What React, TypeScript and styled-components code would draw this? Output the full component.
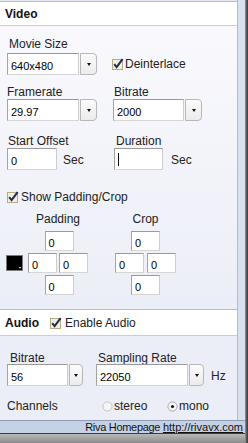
import React from "react";
import styled, { createGlobalStyle } from "styled-components";

const Global = createGlobalStyle`
  html, body { margin: 0; padding: 0; background: #ffffff; }
  body { font-family: "Liberation Sans", Arial, sans-serif; color: #1e1e1e; }
  * { box-sizing: border-box; }
`;

const Frame = styled.div`
  width: 248px;
  height: 443px;
  display: flex;
  overflow: hidden;
`;

const Main = styled.div`
  width: 245px;
  display: flex;
  flex-direction: column;
`;

const RightEdge = styled.div`
  width: 3px;
  background: linear-gradient(to right, #9c9c9c, #5c5c5c 45%, #3a3a3a);
`;

const Upper = styled.div`
  flex: 1;
  display: flex;
  min-height: 0;
`;

const Panel = styled.div`
  width: 238px;
  display: flex;
  flex-direction: column;
  border-right: 1px solid #b3bbcc;
  padding-top: 1px;
  background: #e6e8f1;
`;

const Strip = styled.div`
  flex: 1;
  background: #dae1ee;
`;

const Footer = styled.div`
  height: 13px;
  border-top: 1px solid #8e9cb6;
  background: #c5d1e5;
  display: flex;
  justify-content: flex-end;
  align-items: center;
  padding-right: 2px;
  font-size: 11px;
  line-height: 12px;
  color: #111;
  white-space: pre;
`;

const FooterText = styled.span`
  letter-spacing: -0.3px;
`;

const FooterLink = styled.span`
  text-decoration: underline;
  color: #111;
`;

const BottomEdge = styled.div`
  height: 10px;
  border-top: 1px solid #3c3c3c;
  background: linear-gradient(#b9b9b9, #8c8c8c);
`;

const SectionHeader = styled.div<{ $h: number }>`
  height: ${(p) => p.$h}px;
  background: #ffffff;
  border-top: 1px solid #b7bbca;
  border-bottom: 1px solid #c9ccd9;
  display: flex;
  align-items: center;
  padding-left: 5px;
`;

const HeaderTitle = styled.span`
  font-weight: bold;
  font-size: 12px;
  color: #111;
  margin-right: 11px;
`;

const VideoBody = styled.div`
  flex: 1;
  background: linear-gradient(#f9f9fd, #eceef7);
  padding: 11px 0 0 7px;
  display: flex;
  flex-direction: column;
`;

const AudioBody = styled.div`
  height: 84px;
  background: #eceef7;
  padding: 15px 0 0 7px;
  display: flex;
  flex-direction: column;
`;

const FieldGrid = styled.div`
  display: grid;
  grid-template-columns: 106px auto;
`;

const Field = styled.div<{ $mt?: number; $ml?: number; $end?: boolean }>`
  display: flex;
  flex-direction: column;
  justify-content: ${(p) => (p.$end ? "flex-end" : "flex-start")};
  margin-top: ${(p) => p.$mt ?? 0}px;
  margin-left: ${(p) => p.$ml ?? 0}px;
`;

const Label = styled.div<{ $indent?: number; $mb?: number }>`
  font-size: 12px;
  line-height: 14px;
  height: 14px;
  padding-left: ${(p) => p.$indent ?? 0}px;
  margin-bottom: ${(p) => p.$mb ?? 0}px;
  color: #222;
  white-space: nowrap;
`;

const ControlRow = styled.div<{ $mt?: number; $gap?: number; $top?: boolean }>`
  display: flex;
  align-items: ${(p) => (p.$top ? "flex-start" : "center")};
  margin-top: ${(p) => p.$mt ?? 0}px;
  gap: ${(p) => p.$gap ?? 0}px;
`;

const ComboWrap = styled.div<{ $w: number }>`
  width: ${(p) => p.$w}px;
  height: 22px;
  display: flex;
`;

const TextBox = styled.div<{ $w?: number; $h?: number }>`
  ${(p) => (p.$w ? `width: ${p.$w}px;` : "flex: 1;")}
  height: ${(p) => p.$h ?? 22}px;
  background: #ffffff;
  border: 1px solid;
  border-color: #9a9a9a #cdcdcd #d6d6d6 #a4a4a4;
  display: flex;
  align-items: center;
  padding: 3px 0 0 3px;
  font-size: 11px;
  color: #000;
  white-space: nowrap;
`;

const ComboButton = styled.div<{ $w: number }>`
  width: ${(p) => p.$w}px;
  margin-left: 1px;
  border: 1px solid #b8b8b8;
  border-radius: 0 4px 4px 0;
  background: linear-gradient(#fbfbfb, #ececec);
  display: flex;
  align-items: center;
  justify-content: center;
  padding-top: 1px;
`;

const Arrow = styled.span`
  width: 0;
  height: 0;
  border-left: 2.5px solid transparent;
  border-right: 2.5px solid transparent;
  border-top: 3px solid #111;
`;

const Caret = styled.span`
  width: 1px;
  height: 13px;
  background: #000;
  margin-top: -3px;
`;

const Unit = styled.span<{ $ml: number }>`
  font-size: 12px;
  margin-left: ${(p) => p.$ml}px;
  padding-top: 1px;
  color: #222;
`;

const CheckRow = styled.label<{ $mt?: number; $ml?: number; $gap?: number; $h?: number }>`
  display: flex;
  align-items: center;
  height: ${(p) => p.$h ?? 14}px;
  gap: ${(p) => p.$gap ?? 1}px;
  margin-top: ${(p) => p.$mt ?? 0}px;
  margin-left: ${(p) => p.$ml ?? 0}px;
  font-size: 12px;
  color: #222;
  white-space: nowrap;
`;

const PadGrid = styled.div`
  display: grid;
  grid-template-columns: 22px 87px 61px;
  grid-template-rows: 17px 20px 20px 20px;
  row-gap: 2px;
  margin-top: 8px;
  margin-left: -1px;
`;

const PadCell = styled.div<{ $w: number; $shift?: number; $gap?: number }>`
  width: ${(p) => p.$w}px;
  display: flex;
  justify-content: center;
  padding-left: ${(p) => p.$shift ?? 0}px;
  gap: ${(p) => p.$gap ?? 0}px;
`;

const SwatchCell = styled.div`
  align-self: center;
  display: flex;
`;

const Channels = styled.div`
  display: grid;
  grid-template-columns: 95px 65px auto;
  align-items: center;
  height: 14px;
  margin-top: 13px;
  font-size: 12px;
  color: #222;
`;

const RadioItem = styled.span`
  display: inline-flex;
  align-items: center;
  gap: 1px;
`;

const Combo: React.FC<{ value: string; w: number; bw?: number }> = ({ value, w, bw = 17 }) => (
  <ComboWrap $w={w}>
    <TextBox>{value}</TextBox>
    <ComboButton $w={bw}>
      <Arrow />
    </ComboButton>
  </ComboWrap>
);

const CheckIcon: React.FC = () => (
  <svg width="12" height="12" viewBox="0 0 12 12">
    <rect x="0.5" y="1.5" width="10" height="10" fill="#f3efdc" stroke="#b5ab86" />
    <path d="M2.2 6.2 L4.6 9.2 L10.6 1.2" stroke="#1e2c56" strokeWidth="2" fill="none" />
  </svg>
);

const RadioIcon: React.FC<{ on?: boolean }> = ({ on }) => (
  <svg width="11" height="11" viewBox="0 0 11 11">
    <circle cx="5.5" cy="5.5" r="4.6" fill="#f5f5f5" stroke={on ? "#a8a8a8" : "#c4c4c4"} />
    {on && <circle cx="5.5" cy="5.5" r="1.6" fill="#1a1a1a" />}
  </svg>
);

const ColorSwatch: React.FC = () => (
  <svg width="17" height="16" viewBox="0 0 17 16">
    <rect x="0.5" y="0.5" width="16" height="15" fill="#000" stroke="#7a7a7a" />
    <polygon points="12.5,12 15.5,12 14,13.6" fill="#d8d8d8" />
  </svg>
);

export default function App() {
  return (
    <>
      <Global />
      <Frame>
        <Main>
          <Upper>
            <Panel>
              <SectionHeader $h={25}>
                <HeaderTitle>Video</HeaderTitle>
              </SectionHeader>
              <VideoBody>
                <FieldGrid>
                  <Field>
                    <Label $indent={2}>Movie Size</Label>
                    <ControlRow $mt={2}>
                      <Combo value="640x480" w={90} />
                    </ControlRow>
                  </Field>
                  <Field $end>
                    <ControlRow>
                      <CheckRow $ml={-1} $h={22}>
                        <CheckIcon />
                        Deinterlace
                      </CheckRow>
                    </ControlRow>
                  </Field>

                  <Field $mt={10}>
                    <Label>Framerate</Label>
                    <ControlRow>
                      <Combo value="29.97" w={90} />
                    </ControlRow>
                  </Field>
                  <Field $mt={10}>
                    <Label $indent={1}>Bitrate</Label>
                    <ControlRow>
                      <Combo value="2000" w={89} />
                    </ControlRow>
                  </Field>

                  <Field $mt={13}>
                    <Label $indent={1}>Start Offset</Label>
                    <ControlRow>
                      <TextBox $w={50}>0</TextBox>
                      <Unit $ml={6}>Sec</Unit>
                    </ControlRow>
                  </Field>
                  <Field $mt={13} $ml={1}>
                    <Label $indent={2}>Duration</Label>
                    <ControlRow>
                      <TextBox $w={49}>
                        <Caret />
                      </TextBox>
                      <Unit $ml={8}>Sec</Unit>
                    </ControlRow>
                  </Field>
                </FieldGrid>

                <CheckRow $mt={20} $gap={2}>
                  <CheckIcon />
                  Show Padding/Crop
                </CheckRow>

                <PadGrid>
                  <span />
                  <PadCell $w={60}>
                    <Label>Padding</Label>
                  </PadCell>
                  <PadCell $w={61}>
                    <Label>Crop</Label>
                  </PadCell>

                  <span />
                  <PadCell $w={60} $shift={2}>
                    <TextBox $w={29} $h={20}>0</TextBox>
                  </PadCell>
                  <PadCell $w={61}>
                    <TextBox $w={29} $h={20}>0</TextBox>
                  </PadCell>

                  <SwatchCell>
                    <ColorSwatch />
                  </SwatchCell>
                  <PadCell $w={60} $gap={2}>
                    <TextBox $w={29} $h={20}>0</TextBox>
                    <TextBox $w={29} $h={20}>0</TextBox>
                  </PadCell>
                  <PadCell $w={61} $gap={3}>
                    <TextBox $w={29} $h={20}>0</TextBox>
                    <TextBox $w={29} $h={20}>0</TextBox>
                  </PadCell>

                  <span />
                  <PadCell $w={60} $shift={2}>
                    <TextBox $w={29} $h={20}>0</TextBox>
                  </PadCell>
                  <PadCell $w={61}>
                    <TextBox $w={29} $h={20}>0</TextBox>
                  </PadCell>
                </PadGrid>
              </VideoBody>

              <SectionHeader $h={27}>
                <HeaderTitle>Audio</HeaderTitle>
                <CheckRow $gap={3}>
                  <CheckIcon />
                  Enable Audio
                </CheckRow>
              </SectionHeader>
              <AudioBody>
                <ControlRow $top>
                  <Field>
                    <Label $indent={3} $mb={-1}>Bitrate</Label>
                    <Combo value="56" w={76} bw={14} />
                  </Field>
                  <Field $ml={13}>
                    <Label $indent={2} $mb={-1}>Sampling Rate</Label>
                    <ControlRow>
                      <Combo value="22050" w={108} bw={15} />
                      <Unit $ml={7}>Hz</Unit>
                    </ControlRow>
                  </Field>
                </ControlRow>
                <Channels>
                  <span>Channels</span>
                  <RadioItem>
                    <RadioIcon />
                    stereo
                  </RadioItem>
                  <RadioItem>
                    <RadioIcon on />
                    mono
                  </RadioItem>
                </Channels>
              </AudioBody>
            </Panel>
            <Strip />
          </Upper>
          <Footer>
            <FooterText>Riva Homepage </FooterText>
            <FooterLink>http://rivavx.com</FooterLink>
          </Footer>
          <BottomEdge />
        </Main>
        <RightEdge />
      </Frame>
    </>
  );
}
